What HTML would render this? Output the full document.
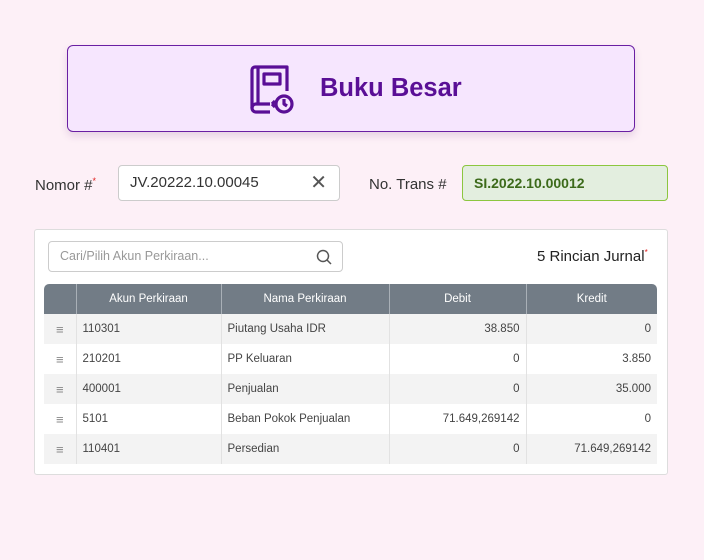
<!DOCTYPE html>
<html><head><style>
*{box-sizing:border-box;margin:0;padding:0}
body{width:704px;height:560px;background:#fdf0f7;font-family:"Liberation Sans",sans-serif;position:relative;overflow:hidden;color:#333}
.abs{position:absolute}
.hdr{left:67px;top:45px;width:568px;height:87px;background:#f6e6fe;border:1.5px solid #6a1fa3;border-radius:6px;box-shadow:0 4px 8px rgba(100,40,120,.15)}
.hdr .t{position:absolute;left:252px;top:28px;font-size:25.5px;font-weight:bold;color:#5a0f96}
.lbl{font-size:15px;color:#333}
.inp{background:#fff;border:1px solid #ccc;border-radius:4px;font-size:15px;padding-left:11px;line-height:34px}
.card{left:34px;top:229px;width:634px;height:246px;background:#fff;border:1px solid #ddd;border-radius:3px}
table{position:absolute;left:44px;top:284px;border-collapse:collapse;font-size:11.5px}
th{background:#727c86;color:#fff;font-weight:normal;height:30px;border-left:1px solid #a9b0b7;text-align:center}
th:first-child{border-left:none;border-radius:5px 0 0 0}
th:last-child{border-radius:0 5px 0 0}
td{height:30px;border-left:1px solid #e2e2e2;padding:0 6px;color:#444}
td:first-child{border-left:none;text-align:center;color:#888;font-size:13px}
tr:nth-child(even) td{background:#f3f3f3}
.r{text-align:right}
</style></head><body>
<div class="abs hdr">
<svg style="position:absolute;left:178px;top:18px" width="48" height="52" viewBox="0 0 48 52" fill="none" stroke="#5a0f96" stroke-width="3.2" stroke-linejoin="round">
<path d="M6 44V6a3 3 0 0 1 3-3h32v24"/><path d="M12 3v36"/><path d="M6 44a4 4 0 0 1 4-4h14"/><path d="M6 44a4 4 0 0 0 4 4h14"/>
<rect x="18" y="10" width="16" height="10"/>
<circle cx="38" cy="40" r="8"/><path d="M38 35v5l3 2"/><path d="M26 40l3-3M26 40l3 3"/>
</svg>
<div class="t">Buku Besar</div></div>
<div class="abs lbl" style="left:35px;top:176px">Nomor #<sup style="color:#e02020;font-size:9px">*</sup></div>
<div class="abs inp" style="left:118px;top:165px;width:222px;height:36px">JV.20222.10.00045<span style="position:absolute;right:12px;top:0;font-size:20px;color:#555">✕</span></div>
<div class="abs lbl" style="left:369px;top:176px">No. Trans #</div>
<div class="abs inp" style="left:462px;top:165px;width:206px;height:36px;background:#e3eedf;border-color:#8cc63f;color:#3c6a1a;font-weight:bold;font-size:14px">SI.2022.10.00012</div>
<div class="abs card"></div>
<div class="abs inp" style="left:48px;top:241px;width:295px;height:31px;line-height:29px;font-size:12.5px;color:#999">Cari/Pilih Akun Perkiraan...
<svg style="position:absolute;right:10px;top:7px" width="16" height="16" viewBox="0 0 16 16" fill="none" stroke="#555" stroke-width="1.5"><circle cx="7" cy="7" r="5.5"/><path d="M11 11l4 4"/></svg></div>
<div class="abs" style="left:537px;top:248px;font-size:15px;color:#222">5 Rincian Jurnal<sup style="color:#e02020;font-size:8px">*</sup></div>
<table>
<tr><th style="width:32px"></th><th style="width:145px">Akun Perkiraan</th><th style="width:168px">Nama Perkiraan</th><th style="width:137px">Debit</th><th style="width:131px">Kredit</th></tr>
<tr><td>≡</td><td>110301</td><td>Piutang Usaha IDR</td><td class="r">38.850</td><td class="r">0</td></tr>
<tr><td>≡</td><td>210201</td><td>PP Keluaran</td><td class="r">0</td><td class="r">3.850</td></tr>
<tr><td>≡</td><td>400001</td><td>Penjualan</td><td class="r">0</td><td class="r">35.000</td></tr>
<tr><td>≡</td><td>5101</td><td>Beban Pokok Penjualan</td><td class="r">71.649,269142</td><td class="r">0</td></tr>
<tr><td>≡</td><td>110401</td><td>Persedian</td><td class="r">0</td><td class="r">71.649,269142</td></tr>
</table>
</body></html>
